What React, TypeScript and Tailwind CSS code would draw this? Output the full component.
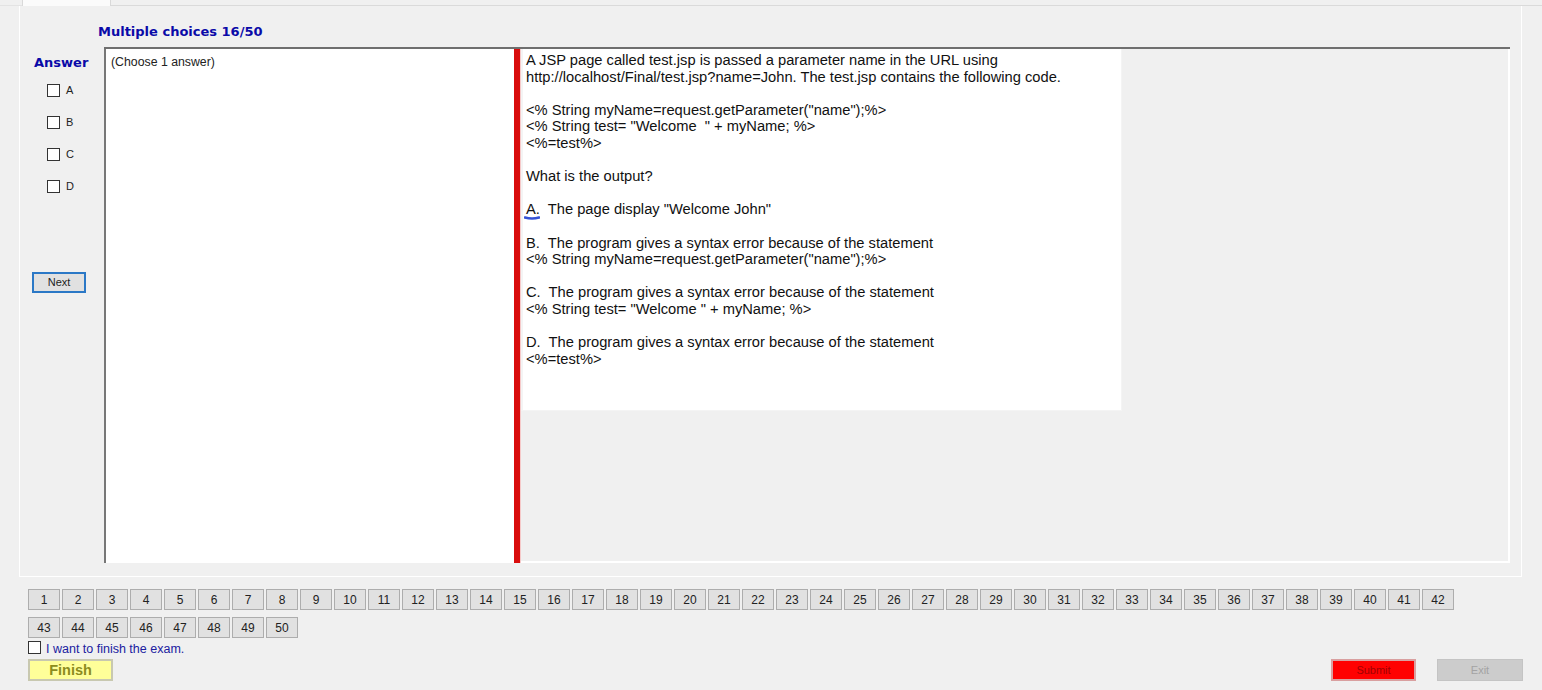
import React from "react";

const lines: string[] = [
  "A JSP page called test.jsp is passed a parameter name in the URL using",
  "http://localhost/Final/test.jsp?name=John. The test.jsp contains the following code.",
  "",
  '<% String myName=request.getParameter("name");%>',
  '<% String test= "Welcome  " + myName; %>',
  "<%=test%>",
  "",
  "What is the output?",
  "",
  "__A__",
  "",
  "B.  The program gives a syntax error because of the statement",
  '<% String myName=request.getParameter("name");%>',
  "",
  "C.  The program gives a syntax error because of the statement",
  '<% String test= "Welcome " + myName; %>',
  "",
  "D.  The program gives a syntax error because of the statement",
  "<%=test%>",
];

function Box() {
  return <span className="inline-block w-[13px] h-[13px] bg-white border border-[#333333]" />;
}

export default function App() {
  const nums = Array.from({ length: 50 }, (_, i) => i + 1);
  return (
    <div className="w-[1542px] h-[690px] bg-[#f0f0f0] overflow-hidden font-['Liberation_Sans',Arial,sans-serif] text-black">
      {/* tab header */}
      <div className="flex h-[6px]">
        <div className="w-[22px] border-b border-[#e3e3e3]" />
        <div className="w-[89px] bg-[#fbfbfb] border-x border-[#d9d9d9]" />
        <div className="flex-1 border-b border-[#dadada]" />
      </div>
      {/* tab page */}
      <div className="ml-[19px] w-[1503px] h-[571px] border-x border-b border-[#ffffff] flex flex-col">
        <div className="pl-[78px] pt-[18px] h-[41px] text-[13px] font-bold text-[#0a0aa8] leading-[16px] font-['DejaVu_Sans',Verdana,sans-serif]">
          Multiple choices 16/50
        </div>
        <div className="flex">
          {/* answer column */}
          <div className="w-[84px] flex flex-col">
            <div className="pl-[14px] pt-[8px] text-[13px] font-bold text-[#0a0aa8] leading-[16px] font-['DejaVu_Sans',Verdana,sans-serif]">
              Answer
            </div>
            <div className="flex flex-col gap-[19px] pl-[27px] pt-[13px]">
              {["A", "B", "C", "D"].map((l) => (
                <div key={l} className="flex items-center h-[13px] gap-[6px] text-[11px] text-[#222222]">
                  <Box />
                  <span>{l}</span>
                </div>
              ))}
            </div>
            <div className="pl-[12px] pt-[79px]">
              <div className="w-[54px] h-[21px] border-2 border-[#2b78c6] bg-[#e1e1e1] flex items-center justify-center text-[11px] text-[#222222]">
                Next
              </div>
            </div>
          </div>
          {/* split container */}
          <div className="w-[1406px] h-[516px] flex border-t-2 border-[#6f6f6f]">
            <div className="w-[410px] h-full bg-white border-l-2 border-[#777777] pl-[5px] pt-[6px] text-[12.3px] leading-[14px] text-[#222222]">
              (Choose 1 answer)
            </div>
            <div className="w-[7px] h-full bg-[#d90d0d] border-r border-[#f5c9c9]" />
            <div className="flex-1 h-full flex flex-col border-r-2 border-b-2 border-white">
              <div className="w-[601px] h-[362px] bg-white border-l-2 border-[#8a8a8a] border-r border-b border-[#f4f4f4] pl-[3px] pt-[3px] text-[14.7px] leading-[16.6px] text-[#111111]">
                {lines.map((t, i) =>
                  t === "__A__" ? (
                    <div key={i} className="h-[16.6px] whitespace-pre relative">
                      <span>A.</span>
                      <span>{'  The page display "Welcome John"'}</span>
                      <svg className="absolute left-[-2px] top-[14px]" width="16" height="5" viewBox="0 0 16 5">
                        <path d="M1 2.5 Q8 4.5 15 2.5" stroke="#3452d6" strokeWidth="2.6" fill="none" strokeLinecap="round" />
                      </svg>
                    </div>
                  ) : (
                    <div key={i} className="h-[16.6px] whitespace-pre">
                      {t}
                    </div>
                  )
                )}
              </div>
            </div>
          </div>
        </div>
      </div>
      {/* number buttons */}
      <div className="ml-[28px] mt-[12px] w-[1428px] flex flex-wrap gap-x-[2px] gap-y-[7px]">
        {nums.map((n) => (
          <div
            key={n}
            className="w-[32px] h-[21px] bg-[#e1e1e1] border border-[#adadad] flex items-center justify-center text-[12px] text-[#222222]"
          >
            {n}
          </div>
        ))}
      </div>
      <div className="ml-[28px] mt-[2px] flex items-center gap-[5px] h-[14px]">
        <Box />
        <span className="text-[12.5px] text-[#2020a0] leading-[14px] relative top-[2px]">I want to finish the exam.</span>
      </div>
      <div className="flex items-start mt-[5px]">
        <div className="ml-[28px] w-[85px] h-[22px] bg-[#ffff99] border-2 border-[#c8c8b0] flex items-center justify-center text-[14.5px] font-bold text-[#8c8c1e] pt-[1px]">
          Finish
        </div>
        <div className="ml-[1218px] w-[85px] h-[22px] bg-[#ff0000] border-2 border-[#d9a0a0] flex items-center justify-center text-[11px] text-[#a00000]">
          Submit
        </div>
        <div className="ml-[21px] w-[86px] h-[22px] bg-[#cccccc] border border-[#c4c4c4] flex items-center justify-center text-[11px] text-[#a3a3a3]">
          Exit
        </div>
      </div>
    </div>
  );
}
